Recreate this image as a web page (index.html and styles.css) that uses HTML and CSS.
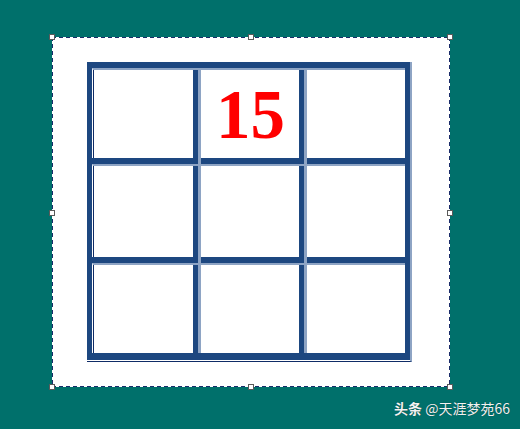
FILE: index.html
```html
<!DOCTYPE html>
<html>
<head>
<meta charset="utf-8">
<link rel="stylesheet" href="styles.css">
</head>
<body>
<div class="canvas">
  <div class="frame">
    <div class="grid">
      <div class="cell first top"></div>
      <div class="cell top"><span class="num">15</span></div>
      <div class="cell top"></div>
      <div class="cell first"></div>
      <div class="cell"></div>
      <div class="cell"></div>
      <div class="cell first"></div>
      <div class="cell"></div>
      <div class="cell"></div>
    </div>
  </div>
  <span class="handle h-tl"></span>
  <span class="handle h-tm"></span>
  <span class="handle h-tr"></span>
  <span class="handle h-ml"></span>
  <span class="handle h-mr"></span>
  <span class="handle h-bl"></span>
  <span class="handle h-bm"></span>
  <span class="handle h-br"></span>
</div>
<div class="watermark"><b>头条</b> @天涯梦苑66</div>
</body>
</html>
```
FILE: styles.css
```css
html, body {
  margin: 0;
  padding: 0;
}
body {
  width: 520px;
  height: 429px;
  background: #00706b;
  position: relative;
  overflow: hidden;
  font-family: "Liberation Sans", "Noto Sans CJK SC", sans-serif;
}
.canvas {
  position: relative;
  box-sizing: border-box;
  margin: 37px 0 0 52px;
  width: 398px;
  height: 350px;
  border: 1px solid transparent;
  background:
    repeating-linear-gradient(90deg, #1b2c6a 0 4px, transparent 4px 7px) top left / 100% 1px no-repeat border-box,
    repeating-linear-gradient(90deg, #1b2c6a 0 4px, transparent 4px 7px) bottom left / 100% 1px no-repeat border-box,
    repeating-linear-gradient(180deg, #1b2c6a 0 4px, transparent 4px 7px) top left / 1px 100% no-repeat border-box,
    repeating-linear-gradient(180deg, #1b2c6a 0 4px, transparent 4px 7px) top right / 1px 100% no-repeat border-box,
    #fff;
  padding: 24px 0 0 34px;
}
.frame {
  width: 323px;
  border-right: 2px solid #8ea4c4;
  border-bottom: 1px solid #0f2c66;
  padding-bottom: 1px;
}
.grid {
  display: grid;
  grid-template-columns: 101px 101px 101px;
  grid-template-rows: 90px 93px 90px;
  column-gap: 5px;
  row-gap: 6px;
  padding: 6px 5px 7px 5px;
  background: #1d4780;
}
.cell {
  position: relative;
  box-sizing: border-box;
  background: #fff;
  border-top: 2px solid #8ea4c4;
  border-left: 3px solid #8ea4c4;
  display: flex;
  align-items: center;
  justify-content: center;
}
.cell::before,
.cell::after {
  content: "";
  position: absolute;
  background: #8ea4c4;
}
.cell::before {
  left: -3px;
  top: -8px;
  width: 3px;
  height: 6px;
}
.cell::after {
  left: -8px;
  top: -2px;
  width: 5px;
  height: 2px;
}
.cell.top::before {
  display: none;
}
.cell.first::before,
.cell.first::after {
  display: none;
}
.cell.first {
  border-left-color: #fff;
  box-shadow: inset 1px 0 0 #0f2c66;
  border-left-width: 1px;
  padding-left: 2px;
}
.num {
  font-family: "Liberation Serif", serif;
  font-weight: bold;
  font-size: 69px;
  line-height: 1;
  color: #ff0000;
  margin-top: 2px;
  margin-left: 1px;
}
.handle {
  position: absolute;
  width: 4px;
  height: 4px;
  background: #fff;
  border: 1px solid #5a5a5a;
}
.h-tl { left: -4px; top: -4px; }
.h-tm { left: 195px; top: -4px; }
.h-tr { right: -4px; top: -4px; }
.h-ml { left: -4px; top: 172px; }
.h-mr { right: -4px; top: 172px; }
.h-bl { left: -4px; bottom: -4px; }
.h-bm { left: 195px; bottom: -4px; }
.h-br { right: -4px; bottom: -4px; }
.watermark {
  position: absolute;
  left: 394px;
  top: 399px;
  font-family: "Noto Sans CJK SC", sans-serif;
  font-size: 14px;
  line-height: 18px;
  color: #f2f2f2;
  text-shadow: 0 0 1px rgba(0,0,0,0.5);
  white-space: nowrap;
}
.watermark b {
  font-weight: bold;
}
```
